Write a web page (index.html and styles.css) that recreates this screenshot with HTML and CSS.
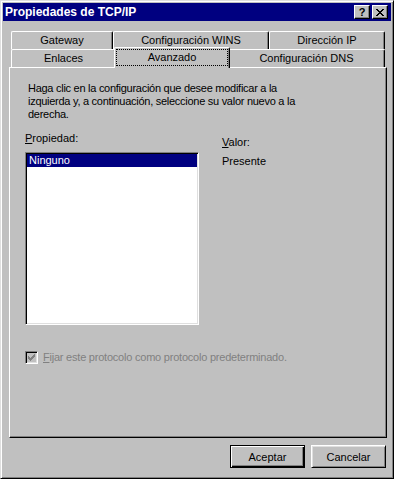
FILE: index.html
```html
<!DOCTYPE html>
<html lang="es">
<head>
    <meta charset="UTF-8">
    <title>Propiedades de TCP/IP</title>
    <link rel="stylesheet" href="styles.css">
</head>
<body>
    <div class="window">
        <div class="titlebar">
            <span class="title">Propiedades de TCP/IP</span>
            <div class="title-buttons">
                <span class="tb-btn tb-help">?</span>
                <span class="tb-btn tb-close">
                    <svg width="8" height="7" viewBox="0 0 8 7"><path d="M0 0h2v1h-2zM6 0h2v1h-2zM1 1h2v1h-2zM5 1h2v1h-2zM2 2h4v1h-4zM3 3h2v1h-2zM2 4h4v1h-4zM1 5h2v1h-2zM5 5h2v1h-2zM0 6h2v1h-2zM6 6h2v1h-2z" fill="#000"/></svg>
                </span>
            </div>
        </div>

        <div class="client">
            <div class="tabs">
                <div class="tab-row">
                    <div class="tab tab-gateway">Gateway</div>
                    <div class="tab tab-wins">Configuración WINS</div>
                    <div class="tab tab-ip">Dirección IP</div>
                </div>
                <div class="tab-row">
                    <div class="tab tab-enlaces">Enlaces</div>
                    <div class="tab tab-avanzado active"><span class="focus">Avanzado</span></div>
                    <div class="tab tab-dns">Configuración DNS</div>
                </div>
            </div>

            <div class="panel">
                <p class="intro">Haga clic en la configuración que desee modificar a la<br>izquierda y, a continuación, seleccione su valor nuevo a la<br>derecha.</p>

                <div class="props">
                    <div class="col-left">
                        <div class="label"><u>P</u>ropiedad:</div>
                        <div class="listbox">
                            <div class="item selected">Ninguno</div>
                        </div>
                    </div>
                    <div class="col-right">
                        <div class="label label-valor"><u>V</u>alor:</div>
                        <div class="value">Presente</div>
                    </div>
                </div>

                <div class="check-row">
                    <span class="checkbox">
                        <svg width="7" height="7" viewBox="0 0 7 7"><path d="M6 0h1v1h-1zM5 1h2v1h-2zM0 2h1v1h-1zM4 2h3v1h-3zM0 3h2v1h-2zM3 3h3v1h-3zM0 4h5v1h-5zM1 5h3v1h-3zM2 6h1v1h-1z" fill="#808080"/></svg>
                    </span>
                    <span class="check-label"><u>F</u>ijar este protocolo como protocolo predeterminado.</span>
                </div>
            </div>

            <div class="footer">
                <button class="btn default">Aceptar</button>
                <button class="btn">Cancelar</button>
            </div>
        </div>
    </div>
</body>
</html>
```

FILE: styles.css
```css
body {
    margin: 0;
    padding: 0;
    background-color: #c0c0c0;
    font-family: "Liberation Sans", Arial, sans-serif;
    font-size: 11px;
    color: #000;
}
.window {
    width: 394px;
    height: 479px;
    box-sizing: border-box;
    border: 1px solid;
    border-color: #dfdfdf #000 #000 #dfdfdf;
    box-shadow: inset 1px 1px #fff, inset -1px -1px #808080;
    padding: 2px;
    background-color: #c0c0c0;
}
.titlebar {
    height: 18px;
    background-color: #000080;
    color: #fff;
    display: flex;
    align-items: center;
    justify-content: space-between;
    padding: 0 3px 0 2px;
}
.title {
    font-weight: bold;
    font-size: 12px;
    line-height: 18px;
}
.title-buttons {
    display: flex;
    gap: 2px;
}
.tb-btn {
    width: 16px;
    height: 14px;
    box-sizing: border-box;
    background-color: #c0c0c0;
    border: 1px solid;
    border-color: #fff #000 #000 #fff;
    box-shadow: inset -1px -1px #808080;
    display: flex;
    align-items: center;
    justify-content: center;
    color: #000;
}
.tb-help {
    font-weight: bold;
    font-size: 11px;
    line-height: 12px;
}
.client {
    padding: 10px 4px 0 6px;
}
.tabs {
    padding: 0 2px;
}
.tab-row {
    display: flex;
    height: 18px;
}
.tab {
    box-sizing: border-box;
    height: 18px;
    border-top: 1px solid #fff;
    border-left: 1px solid #fff;
    border-right: 1px solid #000;
    border-top-left-radius: 2px;
    border-top-right-radius: 2px;
    box-shadow: inset -1px 0 #808080;
    text-align: center;
    line-height: 16px;
    background-color: #c0c0c0;
}
.tab-gateway { width: 102px; }
.tab-wins { width: 156px; }
.tab-ip { width: 116px; }
.tab-enlaces { width: 105px; }
.tab-avanzado { width: 112px; }
.tab-dns { width: 157px; }

.tab.active {
    position: relative;
    z-index: 1;
    width: 116px;
    height: 21px;
    margin: -2px -2px -1px;
    padding: 1px 1px 0 1px;
    line-height: 14px;
}
.tab.active .focus {
    display: block;
    height: 17px;
    border: 1px dotted #000;
    box-sizing: border-box;
}
.panel {
    height: 371px;
    box-sizing: border-box;
    border: 1px solid;
    border-color: #fff #000 #000 #fff;
    box-shadow: inset -1px -1px #808080;
    padding: 14px 0 0 15px;
}
.intro {
    margin: 0 0 11px 3px;
    line-height: 13px;
    letter-spacing: -0.27px;
}
.props {
    display: flex;
}
.col-left {
    width: 174px;
}
.label {
    line-height: 13px;
}
.col-left .label {
    margin-bottom: 7px;
}
.listbox {
    height: 173px;
    box-sizing: border-box;
    border: 1px solid;
    border-color: #808080 #fff #fff #808080;
    box-shadow: inset 1px 1px #000, inset -1px -1px #dfdfdf;
    background-color: #fff;
    padding: 1px 1px 0 1px;
}
.item {
    height: 13px;
    line-height: 13px;
    padding-left: 2px;
}
.item.selected {
    background-color: #000080;
    color: #fff;
}
.col-right {
    margin-left: 23px;
}
.label-valor {
    margin-top: 4px;
}
.value {
    margin-top: 6px;
    line-height: 13px;
}
.check-row {
    display: flex;
    align-items: center;
    margin-top: 26px;
    height: 13px;
}
.checkbox {
    width: 13px;
    height: 13px;
    box-sizing: border-box;
    border: 1px solid;
    border-color: #808080 #fff #fff #808080;
    box-shadow: inset 1px 1px #000, inset -1px -1px #dfdfdf;
    background-color: #c0c0c0;
    display: flex;
    align-items: center;
    justify-content: center;
}
.check-label {
    margin-left: 5px;
    color: #808080;
    line-height: 13px;
    letter-spacing: -0.22px;
}
.footer {
    display: flex;
    justify-content: flex-end;
    gap: 6px;
    margin-top: 7px;
    padding-right: 1px;
}
.btn {
    width: 75px;
    height: 23px;
    box-sizing: border-box;
    font-family: "Liberation Sans", Arial, sans-serif;
    font-size: 11px;
    color: #000;
    background-color: #c0c0c0;
    border: 1px solid;
    border-color: #fff #000 #000 #fff;
    box-shadow: inset 1px 1px #dfdfdf, inset -1px -1px #808080;
    padding: 0;
}
.btn.default {
    border-color: #000;
    box-shadow: inset 1px 1px #fff, inset -1px -1px #000, inset -2px -2px #808080;
}
```
